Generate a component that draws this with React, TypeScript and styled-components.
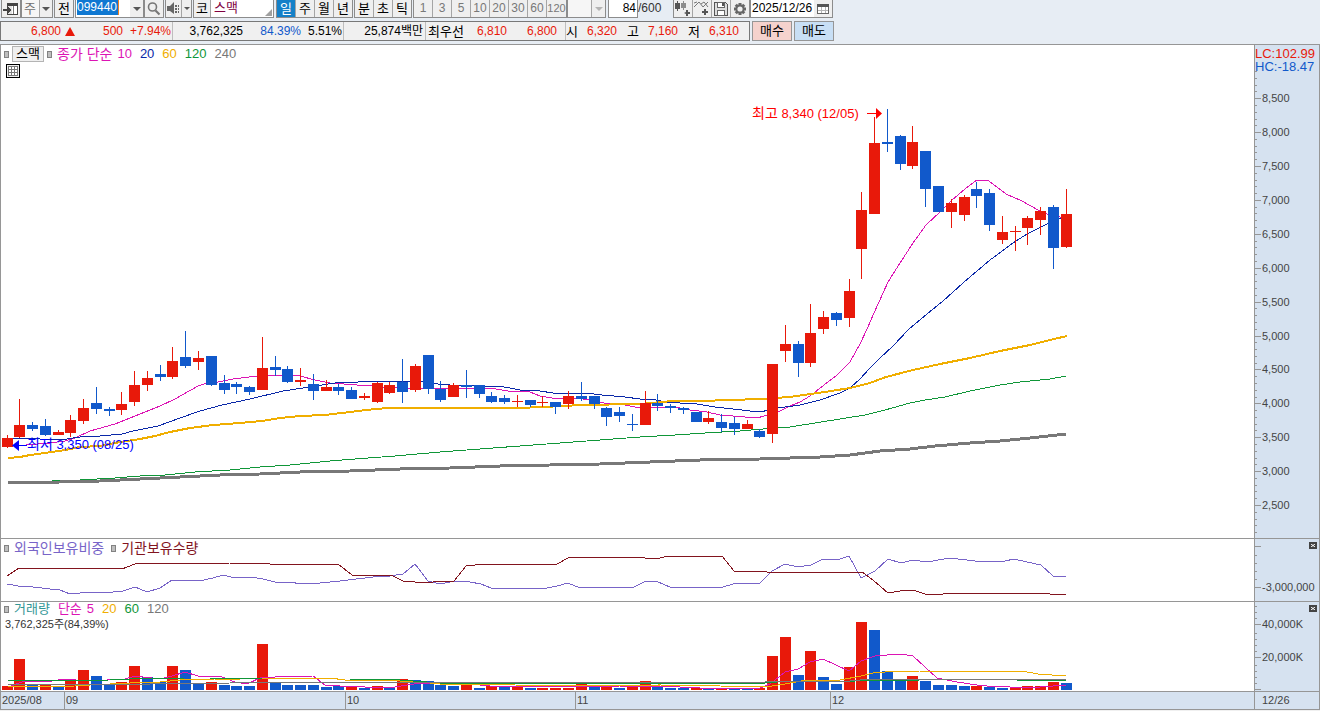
import React from "react";
import styled, { createGlobalStyle } from "styled-components";

const RED = "#e8190a";
const BLUE = "#1159cb";
const PINK = "#dc14b4";
const NAVY = "#0a28a8";
const AMBER = "#f0ae00";
const GREEN = "#0f9638";
const GREY = "#787878";
const LINE = "#969696";
const AXIS_BG = "#d6e2f0";

const GlobalStyle = createGlobalStyle`
  * { box-sizing: border-box; }
  body {
    margin: 0;
    background: #f0f0f0;
    color: #000;
    font: 12px/16px "Liberation Sans", "Noto Sans CJK KR", sans-serif;
  }
  button, input, select { font: inherit; color: inherit; margin: 0; border-radius: 0; }
`;

/* ---------- toolbar ---------- */

const Page = styled.div`
  background: #e7edf4;
  overflow: hidden;
`;

const Toolbar = styled.header`
  display: flex;
  height: 21px;
  padding-left: 1px;
  white-space: nowrap;
`;

const Group = styled.div<{ $gap?: number }>`
  display: flex;
  flex: none;
  height: 18px;
  margin-right: ${(p) => p.$gap ?? 1}px;
  border: solid #8c8c8c;
  border-width: 0 1px 1px;
  background: #fff;
`;

const ToolButton = styled.button<{ $w?: number; $active?: boolean; $dim?: boolean; $size?: number }>`
  display: flex;
  align-items: center;
  justify-content: center;
  flex: none;
  width: ${(p) => p.$w ?? 19}px;
  height: 17px;
  padding: 0;
  border: 0;
  border-right: 1px solid #a5a5a5;
  background: ${(p) => (p.$active ? "#1480c8" : "#efefef")};
  color: ${(p) => (p.$active ? "#fff" : p.$dim ? "#787878" : "#000")};
  font-size: ${(p) => p.$size ?? 13}px;
  line-height: 17px;
  &:last-child { border-right: 0; }
`;

const Select = styled.select<{ $w: number }>`
  width: ${(p) => p.$w}px;
  height: 17px;
  padding: 0 0 0 2px;
  border: 0;
  border-right: 1px solid #a5a5a5;
  background: #f6f6f6;
  color: #6e6e6e;
  font-size: 13px;
  line-height: 17px;
  appearance: none;
  opacity: 1;
`;

const CodeBox = styled.div`
  width: 54px;
  padding-left: 1px;
`;

const CodeInput = styled.input`
  display: block;
  width: 42px;
  height: 15px;
  padding: 0;
  border: 0;
  border-right: 1px solid #f08020;
  background: #0f78d2;
  color: #fff;
  font-size: 12px;
  line-height: 15px;
`;

const NameBox = styled.div`
  position: relative;
  width: 62px;
  padding-left: 3px;
  color: #800040;
  font-size: 13px;
  line-height: 15px;
`;

const Corner = styled.i`
  position: absolute;
  right: 1px;
  bottom: 1px;
  width: 7px;
  height: 7px;
  background: #a0a0a0;
  clip-path: polygon(100% 0, 100% 100%, 0 100%);
`;

const Field = styled.input<{ $w: number; $right?: boolean }>`
  width: ${(p) => p.$w}px;
  height: 17px;
  padding: 0 1px;
  border: 0;
  background: #fff;
  font-size: 12px;
  line-height: 17px;
  text-align: ${(p) => (p.$right ? "right" : "left")};
`;

const Total = styled.span`
  width: 35px;
  font-size: 12px;
  line-height: 17px;
  color: #333;
`;

const Arrow = ({ dim }: { dim?: boolean }) => (
  <svg width="8" height="4" aria-hidden="true">
    <path d="M0 0H8L4 4Z" fill={dim ? "#b4b4b4" : "#555"} />
  </svg>
);

const SmallArrow = () => (
  <svg width="6" height="3" aria-hidden="true">
    <path d="M0 0H6L3 3Z" fill="#555" />
  </svg>
);

const PanelIcon = () => (
  <svg width="16" height="15" aria-hidden="true" shapeRendering="crispEdges">
    <path d="M4.500 2.500H14.500V13.500H4.500Z" fill="#fff" stroke="#444" />
    <path d="M4 2H15V5H4Z" fill="#444" />
    <path d="M5 5H9V13H5Z" fill="#e1e1e1" />
    <path d="M10.500 5V13" stroke="#777" />
    <path d="M0 8H4V5L8 9L4 13V10H0Z" fill="#444" />
  </svg>
);

const SearchIcon = () => (
  <svg width="14" height="14" aria-hidden="true" fill="none" stroke="#777">
    <circle cx="5.500" cy="5" r="4" strokeWidth="1.600" />
    <path d="M8.500 8.500L12.500 12.500" strokeWidth="2.200" />
  </svg>
);

const SpeakerIcon = () => (
  <svg width="13" height="13" aria-hidden="true" fill="#666">
    <path d="M0 4H3L7 0V12L3 9H0Z" />
    <path d="M8 3H10V5H8ZM8 6H10V8H8ZM8 9H10V11H8ZM11 3H12V5H11ZM11 6H12V8H11ZM11 9H12V11H11Z" />
  </svg>
);

const CandlesIcon = () => (
  <svg width="16" height="15" aria-hidden="true" fill="#555">
    <path d="M0 2H2V0H3V2H5V8H3V10H2V8H0Z" />
    <path d="M6 2H8V0H9V2H11V7H9V9H8V7H6Z" fill="#8c8c8c" />
    <path d="M11 9H13V11H15V13H13V15H11V13L9 12L11 11Z" />
  </svg>
);

const LinesIcon = () => (
  <svg width="16" height="15" aria-hidden="true">
    <path d="M0 6L5 1L9 6L14 1M0 2L3 1M7 3L10 1L14 6" fill="none" stroke="#777" />
    <path d="M10 8H12V10H14V12H12V14H10V12H8V10H10Z" fill="#555" />
  </svg>
);

const SaveIcon = () => (
  <svg width="14" height="14" aria-hidden="true" shapeRendering="crispEdges">
    <path d="M.5 .5H11.500L13.500 2.500V13.500H.5Z" fill="#ddd" stroke="#555" />
    <path d="M3.500 .5H10.500V5.500H3.500ZM3.500 8.500H10.500V13.500H3.500Z" fill="#fff" stroke="#666" />
    <path d="M8 1H10V4H8Z" fill="#555" />
  </svg>
);

const GearIcon = () => (
  <svg width="14" height="14" viewBox="-7 -7 14 14" aria-hidden="true">
    <g fill="#666">
      {[0, 45, 90, 135].map((a) => (
        <rect key={a} x="-1.500" y="-6" width="3" height="12" transform={`rotate(${a})`} />
      ))}
      <circle r="4.500" />
    </g>
    <circle r="2.600" fill="#efefef" />
  </svg>
);

const CalendarIcon = () => (
  <svg width="12" height="11" aria-hidden="true" shapeRendering="crispEdges">
    <path d="M.5 1.500H11.500V10.500H.5Z" fill="#fff" stroke="#666" />
    <path d="M0 1H12V4H0Z" fill="#555" />
    <path d="M1 7.500H11M4.500 4V10M8.500 4V10" stroke="#b4b4b4" fill="none" />
  </svg>
);

/* ---------- quote strip ---------- */

const QuoteRow = styled.section`
  display: flex;
  height: 23px;
  gap: 2px;
`;

const Quote = styled.div`
  display: flex;
  width: 750px;
  height: 20px;
  border: 1px solid #787878;
  background: #f0f0f0;
  line-height: 19px;
  white-space: nowrap;
`;

const Segment = styled.div<{ $w: number }>`
  display: flex;
  flex: none;
  width: ${(p) => p.$w}px;
  border-right: 1px solid #bebebe;
  &:last-child { border-right: 0; }
`;

const Value = styled.span<{ $w: number; $color?: string; $ko?: boolean }>`
  flex: none;
  width: ${(p) => p.$w}px;
  color: ${(p) => p.$color ?? "#000"};
  font-size: ${(p) => (p.$ko ? 13 : 12)}px;
  text-align: right;
`;

const Rise = styled.span`
  width: 10px;
  margin: 5px 0 0 4px;
  height: 9px;
  background: ${RED};
  clip-path: polygon(50% 0, 100% 100%, 0 100%);
`;

const OrderButton = styled.button<{ $bg: string }>`
  width: 40px;
  height: 20px;
  padding: 0;
  border: 1px solid #969696;
  background: ${(p) => p.$bg};
  font-size: 13px;
  line-height: 18px;
`;

/* ---------- charts ---------- */

const Chart = styled.main`
  border: solid ${LINE};
  border-width: 1px 1px 0;
  background: #fff;
`;

const Panel = styled.section<{ $h: number }>`
  position: relative;
  display: flex;
  height: ${(p) => p.$h}px;
  border-bottom: 1px solid ${LINE};
`;

const Plot = styled.div`
  flex: 1;
  min-width: 0;
  overflow: hidden;
`;

const Axis = styled.div`
  position: relative;
  flex: none;
  width: 65px;
  border-left: 1px solid ${LINE};
  background: ${AXIS_BG};
`;

const Canvas = styled.svg`
  display: block;
  width: 100%;
  height: 100%;
  font-size: 11px;
`;

const Legend = styled.div<{ $tight?: boolean }>`
  position: absolute;
  top: ${(p) => (p.$tight ? 0 : 1)}px;
  left: 3px;
  display: flex;
  align-items: center;
  gap: 5px;
  font-size: 13px;
  line-height: ${(p) => (p.$tight ? 14 : 16)}px;
  white-space: nowrap;
`;

const Key = styled.span<{ $color: string; $gap?: number; $ko?: boolean }>`
  margin-right: ${(p) => p.$gap ?? 0}px;
  color: ${(p) => p.$color};
  font-size: ${(p) => (p.$ko ? 14 : 13)}px;
`;

const Grip = styled.i`
  width: 5px;
  height: 7px;
  border: 1px solid #828282;
  background: #bebebe;
`;

const NameButton = styled.button`
  width: 32px;
  height: 16px;
  margin: 0 -2px;
  padding: 0;
  border: 1px solid #b4b4b4;
  background: #efefef;
  font-size: 13px;
  line-height: 14px;
`;

const GridButton = styled.button`
  position: absolute;
  top: 19px;
  left: 5px;
  width: 14px;
  height: 14px;
  padding: 1px;
  border: 1px solid #000;
  background: #efefef;
  svg { display: block; }
`;

const VolumeNote = styled.p`
  position: absolute;
  top: 15px;
  left: 4px;
  margin: 0;
  font-size: 11px;
  line-height: 14px;
  color: #333;
`;

const CloseButton = styled.button`
  position: absolute;
  top: 3px;
  right: 2px;
  width: 8px;
  height: 7px;
  padding: 0;
  border: 0;
  background: #444;
  svg { display: block; margin: 2px; }
`;

const Extremes = styled.div`
  position: absolute;
  top: 2px;
  left: 0;
  font-size: 13px;
  line-height: 13px;
  color: ${BLUE};
  white-space: nowrap;
  b { display: block; font-weight: 400; color: ${RED}; }
`;

const TimeRow = styled.footer`
  display: flex;
  height: 18px;
  border-bottom: 1px solid ${LINE};
  background: ${AXIS_BG};
  font-size: 11px;
  line-height: 16px;
  color: #444;
`;

const Month = styled.span<{ $w?: number }>`
  ${(p) => (p.$w ? `width: ${p.$w}px; flex: none;` : "flex: 1;")}
  padding-left: 1px;
  border-left: 1px solid ${LINE};
  &:first-child { border-left: 0; }
`;

const LastDate = styled.span`
  flex: none;
  width: 65px;
  padding-left: 7px;
  border-left: 1px solid ${LINE};
`;

/* One row for each session: direction, high, body top, body bottom, low. */
type Candle = [string, number, number, number, number];
const candles: Candle[] = [
  ["r", 435, 438, 447, 448], ["r", 399, 425, 437, 438], ["b", 422, 425, 429, 431], ["b", 419, 426, 435, 436],
  ["r", 430, 432, 435, 435], ["r", 415, 420, 433, 437], ["r", 399, 408, 421, 424], ["b", 387, 403, 409, 414],
  ["b", 407, 409, 411, 416], ["r", 392, 404, 410, 415], ["r", 371, 385, 402, 406], ["r", 371, 378, 385, 391],
  ["b", 365, 374, 377, 381], ["r", 347, 361, 377, 379], ["b", 331, 357, 366, 368], ["r", 351, 358, 362, 370],
  ["b", 356, 356, 385, 386], ["b", 375, 383, 390, 394], ["b", 382, 384, 387, 394], ["b", 386, 387, 392, 395],
  ["r", 337, 368, 390, 390], ["b", 356, 367, 370, 376], ["b", 366, 369, 382, 383], ["r", 368, 380, 382, 386],
  ["b", 374, 384, 391, 400], ["r", 380, 387, 391, 391], ["b", 384, 387, 391, 395], ["b", 387, 390, 399, 399],
  ["r", 393, 396, 398, 400], ["r", 382, 383, 402, 403], ["r", 382, 385, 393, 394], ["b", 359, 382, 392, 403],
  ["r", 364, 366, 390, 392], ["b", 355, 355, 389, 394], ["b", 381, 389, 400, 402], ["r", 383, 385, 397, 397],
  ["b", 370, 385, 387, 398], ["b", 385, 385, 394, 398], ["b", 392, 396, 402, 403], ["b", 395, 398, 402, 404],
  ["r", 395, 401, 402, 407], ["b", 400, 400, 405, 407], ["r", 396, 402, 403, 407], ["b", 402, 402, 407, 414],
  ["r", 391, 396, 404, 409], ["b", 382, 396, 399, 401], ["b", 396, 396, 404, 409], ["b", 407, 408, 417, 426],
  ["b", 407, 412, 416, 422], ["b", 414, 424, 425, 431], ["r", 391, 403, 425, 425], ["b", 394, 403, 406, 411],
  ["b", 404, 406, 408, 413], ["b", 407, 408, 410, 414], ["b", 412, 412, 422, 422], ["r", 411, 418, 422, 424],
  ["b", 414, 422, 428, 432], ["b", 417, 423, 429, 435], ["r", 420, 424, 429, 429], ["b", 429, 431, 437, 438],
  ["r", 364, 364, 434, 443], ["r", 325, 344, 351, 362], ["b", 341, 344, 363, 377], ["r", 304, 333, 363, 367],
  ["r", 311, 317, 329, 334], ["b", 312, 313, 320, 326], ["r", 279, 291, 318, 327], ["r", 192, 210, 249, 279],
  ["r", 117, 143, 214, 214], ["b", 109, 142, 144, 152], ["b", 135, 136, 164, 170], ["r", 126, 142, 166, 169],
  ["b", 151, 151, 189, 207], ["b", 186, 186, 212, 212], ["r", 199, 203, 212, 228], ["r", 195, 197, 215, 221],
  ["b", 182, 189, 196, 208], ["b", 189, 193, 225, 231], ["r", 216, 232, 240, 244], ["r", 226, 231, 232, 251],
  ["r", 216, 218, 228, 245], ["r", 207, 211, 220, 235], ["b", 205, 207, 248, 269], ["r", 189, 214, 247, 248],
];

/* Direction and height of each volume bar. */
const volumes =
  "r4 r31 b5 r5 b3 r10 r20 b14 b6 r8 r24 b13 b8 r24 b20 b7 r8 b5 b4 b4 r46 b8 b5 b5 b5 b3 b4 r4 b2 r4 b2 r11 b10 b9 b5 b4 r6 b2 r4 b3 r3 b2 r2 r2 r2 r6 b3 r4 b2 r4 r9 b4 b2 b2 r2 b2 r2 b1 b2 r2 r34 r53 b15 r39 b13 b6 r23 r68 b60 b19 b9 r14 b9 b5 b5 b4 r4 b3 b2 r2 r4 r4 r8 b7"
    .split(" ");

const left = (i: number) => Math.floor(2 + (i * 1059) / 83 + 0.1);
const fillOf = (d: string) => (d === "r" ? RED : BLUE);

const Curve = ({ d, color, w = 1 }: { d: string; color: string; w?: number }) => (
  <polyline points={d} fill="none" stroke={color} strokeWidth={w} shapeRendering="crispEdges" />
);

const CloseMark = () => (
  <CloseButton aria-label="닫기">
    <svg width="4" height="3" aria-hidden="true"><path d="M0 0L4 3M4 0L0 3" stroke="#fff" /></svg>
  </CloseButton>
);

const prices = [8500, 8000, 7500, 7000, 6500, 6000, 5500, 5000, 4500, 4000, 3500, 3000, 2500];
const priceY = (p: number) => Math.round(53.2 + (8500 - p) * 0.0678);
const priceTicks = Array.from({ length: 69 }, (_, i) => 8900 - i * 100)
  .filter((p) => p % 500 !== 0 && p > 2000);

const PriceChart = () => (
  <Panel $h={494}>
    <Plot>
      <Canvas role="img" aria-label="스맥 일봉">
        <g transform="translate(-1 -45)">
          <g shapeRendering="crispEdges">
            <Curve color={PINK} d="8,446 26,445 50,443 65,441 75,438 90,431 115,424 135,416 160,406 175,399 198,386 207,383 218,382 233,379 257,376 270,375 282,375 300,376 315,380 330,383 357,385 370,385 383,387 400,388 490,388 508,391 530,392 540,396 552,398 575,398 590,400 604,403 620,404 635,407 675,407 690,410 707,412 720,415 733,416 757,418 778,412 790,406 800,402 810,396 824,385 837,375 850,362 860,344 867,329 874,313 888,282 900,263 913,243 926,225 940,212 952,200 965,189 977,180 989,181 1006,194 1022,201 1038,210 1047,214 1060,217 1066,218" />
            <Curve color={NAVY} d="8,438 40,439 60,440 80,437 100,436 122,434 133,431 158,426 180,418 200,411 222,405 250,399 283,391 310,387 322,385 335,383 358,382 372,381 422,381 438,384 450,385 475,386 497,386 510,388 520,390 540,391 553,393 585,393 602,395 625,397 640,399 652,399 665,402 680,403 697,404 715,407 733,409 750,411 760,412 778,408 800,405 820,400 840,393 850,388 860,379 870,368 880,358 893,346 909,329 927,314 943,301 963,283 977,271 990,260 1013,243 1027,234 1047,224 1061,218 1066,217" />
            <Curve color={GREEN} d="8,483 52,481 80,480 115,478 140,476 165,475 195,472 230,470 260,467 290,465 330,461 355,459 395,456 440,452 480,449 520,446 560,443 600,440 640,437 675,435 705,433 740,431 763,429 790,427 815,423 840,419 865,415 885,410 910,403 925,400 945,397 970,391 1000,385 1020,382 1050,379 1066,376" />
            <Curve color={AMBER} w={2} d="8,458 20,457 30,455 45,453 65,450 80,447 100,446 120,442 140,439 155,436 170,432 190,428 213,425 240,423 262,421 280,418 300,416 325,415 350,412 375,409 390,408 518,408 565,406 580,405 640,404 672,401 700,401 760,399 790,397 803,395 825,392 850,388 870,383 886,377 913,370 940,364 970,358 1000,351 1030,345 1050,340 1067,336" />
            <Curve color={GREY} w={3} d="8,483 60,482 100,481 140,479 180,477 220,475 260,474 300,472 350,471 400,469 450,468 500,466 550,465 600,464 650,462 700,460 760,459 790,458 820,457 850,455 880,451 910,449 935,446 970,443 1000,441 1030,438 1066,434" />
            {candles.map(([d, high, top, bottom, low], i) => (
              <path
                key={i}
                fill={fillOf(d)}
                d={`M${left(i)} ${top}h11V${bottom}h-11ZM${left(i) + 5} ${high}h1V${low}h-1Z`}
              />
            ))}
          </g>
          <path d="M867 113h9v-5l6 5.500l-6 5.500v-5h-9Z" fill="red" />
          <path d="M27 445h-8v-5l-7 5.500l7 5.500v-5h8Z" fill="#00f" />
          <text x="752" y="118" fill="red" fontSize="13"><tspan fontSize="14">최고</tspan> 8,340 (12/05)</text>
          <text x="27" y="449" fill="#00f" fontSize="13"><tspan fontSize="14">최저</tspan> 3,350 (08/25)</text>
        </g>
      </Canvas>
    </Plot>
    <Axis>
      <Canvas>
        <g fill={LINE} shapeRendering="crispEdges">
          {prices.map((p) => <rect key={p} y={priceY(p)} width="6" height="1" />)}
          {priceTicks.map((p) => <rect key={p} y={priceY(p)} width="2" height="1" />)}
        </g>
        <g fill="#444">
          {prices.map((p) => (
            <text key={p} x="7" y={priceY(p) + 4}>{p.toLocaleString("en-US")}</text>
          ))}
        </g>
      </Canvas>
      <Extremes><b>LC:102.99</b>HC:-18.47</Extremes>
    </Axis>
    <Legend>
      <Grip />
      <NameButton>스맥</NameButton>
      <Grip />
      <Key $color={PINK} $ko>종가 단순</Key>
      <Key $color={PINK} $gap={3}>10</Key>
      <Key $color={NAVY} $gap={3}>20</Key>
      <Key $color={AMBER} $gap={3}>60</Key>
      <Key $color={GREEN} $gap={3}>120</Key>
      <Key $color={GREY}>240</Key>
    </Legend>
    <GridButton aria-label="표">
      <svg width="10" height="10" shapeRendering="crispEdges" aria-hidden="true">
        <path d="M.5 .5H9.500V9.500H.5ZM0 3.500H10M0 6.500H10M3.500 0V10M6.500 0V10" fill="#fff" stroke="#787878" />
      </svg>
    </GridButton>
  </Panel>
);

const HoldingsChart = () => (
  <Panel $h={63}>
    <Plot>
      <Canvas role="img" aria-label="외국인보유비중과 기관보유수량">
        <g transform="translate(-1 -539)">
          <Curve color="#7864c8" d="7,584 18,586 33,587 50,589 60,590 70,594 80,593 92,592 113,592 123,591 135,587 147,592 160,588 172,580 190,580 199,581 213,578 223,575 235,578 251,577 263,579 275,582 290,582 301,584 320,583 340,581 373,577 390,576 403,574 415,564 428,581 440,584 455,581 470,582 481,584 491,588 517,589 547,588 557,586 568,583 580,588 600,587 632,588 646,581 658,582 670,587 723,587 733,584 747,583 759,584 772,571 785,564 798,567 811,565 823,559 837,560 849,556 861,578 875,571 888,559 901,563 913,560 927,562 950,558 975,561 1005,561 1014,559 1027,562 1041,565 1053,576 1066,576" />
          <Curve color="#82141e" d="7,576 19,568 115,568 122,569 135,564 145,563 174,563 190,564 230,563 255,563 270,564 338,564 352,575 391,575 403,581 415,582 433,582 454,581 466,566 485,564 557,564 568,558 600,557 638,557 645,558 660,558 668,556 722,556 734,571 765,571 767,572 862,572 873,580 888,593 900,591 913,590 925,594 943,594 948,593 960,594 975,593 1005,593 1010,594 1020,593 1045,593 1050,594 1066,594" />
        </g>
      </Canvas>
    </Plot>
    <Axis>
      <Canvas>
        <g fill={LINE} shapeRendering="crispEdges">
          {[7, 48].map((y) => <rect key={y} y={y} width="6" height="1" />)}
          {[16, 24, 32, 40].map((y) => <rect key={y} y={y} width="2" height="1" />)}
        </g>
        <text x="7" y="52" fill="#444">-3,000,000</text>
      </Canvas>
      <CloseMark />
    </Axis>
    <Legend>
      <Grip />
      <Key $color="#7864c8" $gap={2} $ko>외국인보유비중</Key>
      <Grip />
      <Key $color="#82141e" $ko>기관보유수량</Key>
    </Legend>
  </Panel>
);

const VolumeChart = () => (
  <Panel $h={90}>
    <Plot>
      <Canvas role="img" aria-label="거래량">
        <g transform="translate(-1 -602)">
          <g shapeRendering="crispEdges">
            {volumes.map((v, i) => {
              const h = Number(v.slice(1));
              return <rect key={i} x={left(i)} y={690 - h} width="11" height={h} fill={fillOf(v[0])} />;
            })}
          </g>
          <Curve color={PINK} d="8,687 22,682 38,681 52,681 65,679 76,680 90,681 125,679 135,676 160,679 172,676 185,672 198,676 222,677 235,682 247,684 262,677 275,677 313,676 325,685 340,686 365,687 395,687 420,683 440,684 470,684 490,686 520,686 575,687 620,686 660,686 700,688 760,688 770,684 785,672 798,669 810,662 823,659 836,665 849,671 861,661 875,656 900,654 913,656 937,678 957,682 977,685 987,686 1010,687 1040,687 1066,685" />
          <Curve color={AMBER} d="8,687 75,686 90,685 130,683 160,682 180,680 215,679 240,679 262,678 300,678 330,678 345,680 375,680 400,681 420,682 440,684 508,684 515,685 560,686 660,685 720,686 765,687 785,684 807,680 840,680 861,676 873,673 885,672 920,671 1022,671 1038,674 1066,676" />
          <Curve color={GREEN} d="8,681 110,680 130,679 185,678 210,678 262,679 350,679 400,680 440,683 765,683 790,681 855,681 920,680 1020,680 1066,681" />
          <Curve color={GREY} d="8,685 150,684 230,683 400,682 765,682 780,681 850,681 870,679 1008,679 1066,680" />
        </g>
      </Canvas>
    </Plot>
    <Axis>
      <Canvas>
        <g fill={LINE} shapeRendering="crispEdges">
          {[22, 55, 87].map((y) => <rect key={y} y={y} width="6" height="1" />)}
          {[4, 10, 16, 31, 37, 43, 49, 63, 69, 75, 81].map((y) => <rect key={y} y={y} width="2" height="1" />)}
        </g>
        <g fill="#444">
          <text x="7" y="26">40,000K</text>
          <text x="7" y="59">20,000K</text>
        </g>
      </Canvas>
      <CloseMark />
    </Axis>
    <Legend $tight>
      <Grip />
      <Key $color="#329696" $gap={3}>거래량</Key>
      <Key $color={PINK}>단순</Key>
      <Key $color={PINK} $gap={3}>5</Key>
      <Key $color={AMBER} $gap={3}>20</Key>
      <Key $color={GREEN} $gap={3}>60</Key>
      <Key $color={GREY}>120</Key>
    </Legend>
    <VolumeNote>3,762,325주(84,39%)</VolumeNote>
  </Panel>
);

export default function App() {
  return (
    <Page>
      <GlobalStyle />
      <Toolbar>
        <Group $gap={0}><ToolButton $w={18} aria-label="패널"><PanelIcon /></ToolButton></Group>
        <Group>
          <Select $w={18} aria-label="종목 구분"><option>주</option></Select>
          <ToolButton $w={12} aria-label="구분 목록"><Arrow /></ToolButton>
        </Group>
        <Group><ToolButton $w={18}>전</ToolButton></Group>
        <Group $gap={0}>
          <CodeBox><CodeInput aria-label="종목코드" defaultValue="099440" /></CodeBox>
          <ToolButton $w={13} aria-label="최근 종목"><Arrow /></ToolButton>
        </Group>
        <Group><ToolButton $w={18} aria-label="검색"><SearchIcon /></ToolButton></Group>
        <Group>
          <ToolButton $w={16} aria-label="소리"><SpeakerIcon /></ToolButton>
          <ToolButton $w={9} aria-label="소리 목록"><SmallArrow /></ToolButton>
        </Group>
        <Group $gap={2}>
          <ToolButton $w={17}>코</ToolButton>
          <NameBox>스맥<Corner /></NameBox>
        </Group>
        <Group>
          <ToolButton $active>일</ToolButton>
          <ToolButton>주</ToolButton>
          <ToolButton>월</ToolButton>
          <ToolButton $w={18}>년</ToolButton>
        </Group>
        <Group>
          <ToolButton>분</ToolButton>
          <ToolButton>초</ToolButton>
          <ToolButton $w={18}>틱</ToolButton>
        </Group>
        <Group $gap={0}>
          {[1, 3, 5, 10, 20, 30, 60, 120].map((n) => (
            <ToolButton key={n} $dim $size={n > 99 ? 11 : 12}>{n}</ToolButton>
          ))}
        </Group>
        <Group $gap={2}>
          <Select $w={24} disabled aria-label="분 단위" />
          <ToolButton $w={13} disabled aria-label="분 단위 목록"><Arrow dim /></ToolButton>
        </Group>
        <Group $gap={0}><Field $w={28} $right aria-label="표시 봉 수" defaultValue="84" /></Group>
        <Total>/600</Total>
        <Group $gap={0}>
          <ToolButton aria-label="봉 추가"><CandlesIcon /></ToolButton>
          <ToolButton aria-label="지표 추가"><LinesIcon /></ToolButton>
          <ToolButton aria-label="저장"><SaveIcon /></ToolButton>
          <ToolButton $w={18} aria-label="설정"><GearIcon /></ToolButton>
        </Group>
        <Group>
          <Field $w={63} aria-label="기준일" defaultValue="2025/12/26" />
          <ToolButton $w={18} aria-label="달력"><CalendarIcon /></ToolButton>
        </Group>
      </Toolbar>
      <QuoteRow>
        <Quote>
          <Segment $w={172}>
            <Value $w={60} $color={RED}>6,800</Value>
            <Rise role="img" aria-label="상승" />
            <Value $w={48} $color={RED}>500</Value>
            <Value $w={48} $color={RED}>+7.94%</Value>
          </Segment>
          <Segment $w={171}>
            <Value $w={70}>3,762,325</Value>
            <Value $w={58} $color={BLUE}>84.39%</Value>
            <Value $w={41}>5.51%</Value>
          </Segment>
          <Segment $w={82}><Value $w={79}>25,874백만</Value></Segment>
          <Segment $w={140}>
            <Value $w={38} $ko>최우선</Value>
            <Value $w={43} $color={RED}>6,810</Value>
            <Value $w={50} $color={RED}>6,800</Value>
          </Segment>
          <Segment $w={183}>
            <Value $w={12} $ko>시</Value>
            <Value $w={39} $color={RED}>6,320</Value>
            <Value $w={22} $ko>고</Value>
            <Value $w={39} $color={RED}>7,160</Value>
            <Value $w={22} $ko>저</Value>
            <Value $w={39} $color={RED}>6,310</Value>
          </Segment>
        </Quote>
        <OrderButton $bg="#f5d2cd">매수</OrderButton>
        <OrderButton $bg="#c8dff5">매도</OrderButton>
      </QuoteRow>
      <Chart>
        <PriceChart />
        <HoldingsChart />
        <VolumeChart />
        <TimeRow>
          <Month $w={63}>2025/08</Month>
          <Month $w={281}>09</Month>
          <Month $w={230}>10</Month>
          <Month $w={255}>11</Month>
          <Month>12</Month>
          <LastDate>12/26</LastDate>
        </TimeRow>
      </Chart>
    </Page>
  );
}
